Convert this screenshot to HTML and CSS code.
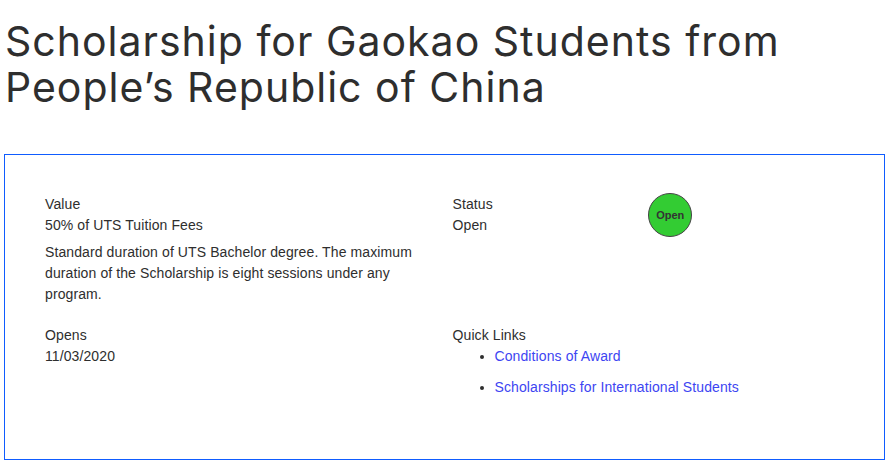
FILE: index.html
```html
<!DOCTYPE html>
<html lang="en">
  <head>
    <meta charset="UTF-8" />
    <meta name="viewport" content="width=device-width, initial-scale=1.0" />
    <title>Scholarship for Gaokao Students from People's Republic of China</title>
    <link rel="stylesheet" href="styles.css">
  </head>
  <body>
    <h1 class="page-title">Scholarship for Gaokao Students from People’s Republic of China</h1>

    <section class="details">
      <div class="details-grid">
        <div class="field">
          <div class="label">Value</div>
          <div class="value">50% of UTS Tuition Fees</div>
          <p class="note">
            Standard duration of UTS Bachelor degree. The maximum duration of
            the Scholarship is eight sessions under any program.
          </p>
        </div>

        <div class="field status-field">
          <div>
            <div class="label">Status</div>
            <div class="value">Open</div>
          </div>
          <div class="status-badge">Open</div>
        </div>

        <div class="field">
          <div class="label">Opens</div>
          <div class="value">11/03/2020</div>
        </div>

        <div class="field">
          <div class="label">Quick Links</div>
          <ul class="quick-links">
            <li><a href="#">Conditions of Award</a></li>
            <li><a href="#">Scholarships for International Students</a></li>
          </ul>
        </div>
      </div>
    </section>
  </body>
</html>
```

FILE: styles.css
```css
:root {
  --text-color: #2e2e2e;
  --border-color: #0f5cff;
  --link-color: #3d45f2;
  --open-color: #33cc33;
}

* {
  margin: 0;
  padding: 0;
  box-sizing: border-box;
}

body {
  font-family: "Liberation Sans", Arial, sans-serif;
  color: var(--text-color);
  background-color: #ffffff;
  padding: 18px 4px 4px;
}

.page-title {
  font-family: Inter, "Liberation Sans", sans-serif;
  font-size: 41px;
  font-weight: 400;
  line-height: 46px;
  letter-spacing: 1px;
  max-width: 820px;
  padding-left: 1px;
  margin-bottom: 44px;
}

.details {
  border: 1px solid var(--border-color);
  padding: 39px 40px 51px;
}

.details-grid {
  display: grid;
  grid-template-columns: 1fr 1fr;
  column-gap: 16px;
  row-gap: 20px;
  font-size: 14px;
  line-height: 21px;
  letter-spacing: 0.1px;
}

.note {
  margin-top: 6px;
  max-width: 380px;
}

.status-field {
  display: grid;
  grid-template-columns: 1fr 1fr;
  align-items: start;
}

.status-badge {
  width: 44px;
  height: 44px;
  border-radius: 50%;
  background-color: var(--open-color);
  border: 1px solid #444;
  display: flex;
  align-items: center;
  justify-content: center;
  font-size: 11px;
  font-weight: 700;
  letter-spacing: 0;
  color: #333;
  margin-top: -1px;
}

.quick-links {
  padding-left: 42px;
}

.quick-links li {
  margin-bottom: 10px;
}

.quick-links a {
  color: var(--link-color);
  text-decoration: none;
}
```
